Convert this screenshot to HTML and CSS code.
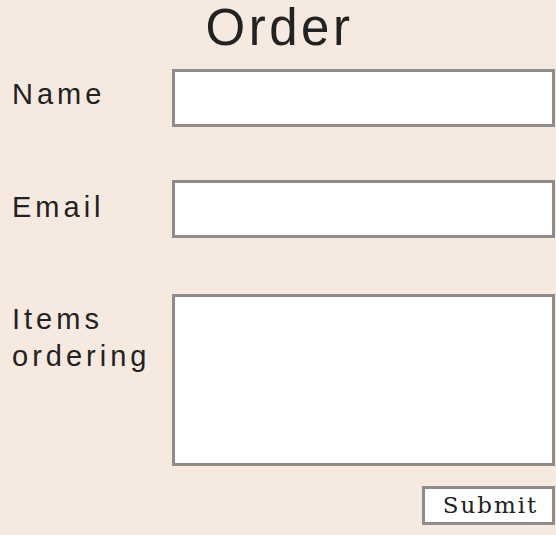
FILE: index.html
```html
<!DOCTYPE html>
<html lang="en">
<head>
<meta charset="utf-8">
<title>Order</title>
<link rel="stylesheet" href="styles.css">
</head>
<body>
<form class="order-form">
  <h1 class="title">Order</h1>
  <div class="row row-name">
    <label class="label" for="name">Name</label>
    <input class="field" id="name" type="text">
  </div>
  <div class="row row-email">
    <label class="label label-email" for="email">Email</label>
    <input class="field" id="email" type="email">
  </div>
  <div class="row row-items">
    <label class="label" for="items">Items<br>ordering</label>
    <textarea class="field area" id="items"></textarea>
  </div>
  <div class="actions">
    <button class="submit" type="button">Submit</button>
  </div>
</form>
</body>
</html>
```

FILE: styles.css
```css
html, body {
  margin: 0;
  padding: 0;
  background: #f6e9e0;
}

body {
  font-family: "Liberation Sans", Arial, sans-serif;
  color: #222;
}

.order-form {
  width: 556px;
  box-sizing: border-box;
  padding: 0 0 0 12px;
}

.title {
  margin: 0 0 13px -12px;
  font-size: 51px;
  line-height: 56px;
  font-weight: normal;
  letter-spacing: 3.5px;
  text-align: center;
  padding-left: 3px;
}

.row {
  display: flex;
  align-items: flex-start;
}

.row-name { margin-bottom: 53px; }
.row-email { margin-bottom: 56px; }
.row-items { margin-bottom: 20px; }

.label {
  width: 160px;
  flex: none;
  font-size: 29px;
  line-height: 37px;
  letter-spacing: 4px;
  padding-top: 7px;
}

.label-email { padding-top: 9px; }

.field {
  flex: none;
  width: 383px;
  height: 58px;
  box-sizing: border-box;
  margin: 0;
  border: 3px solid #8e8d8b;
  background: #fff;
  padding: 4px 8px;
  font-family: "Liberation Sans", Arial, sans-serif;
  font-size: 18px;
  outline: none;
}

.area {
  height: 172px;
  resize: none;
  display: block;
}

.actions {
  display: flex;
  justify-content: flex-end;
  padding-right: 1px;
}

.submit {
  width: 133px;
  height: 39px;
  box-sizing: border-box;
  margin: 0;
  border: 3px solid #8e8d8b;
  background: #fff;
  color: #222;
  font-family: "DejaVu Serif", "Liberation Serif", serif;
  font-size: 23px;
  letter-spacing: 2px;
  padding: 0 0 0 4px;
  line-height: 1;
}
```
